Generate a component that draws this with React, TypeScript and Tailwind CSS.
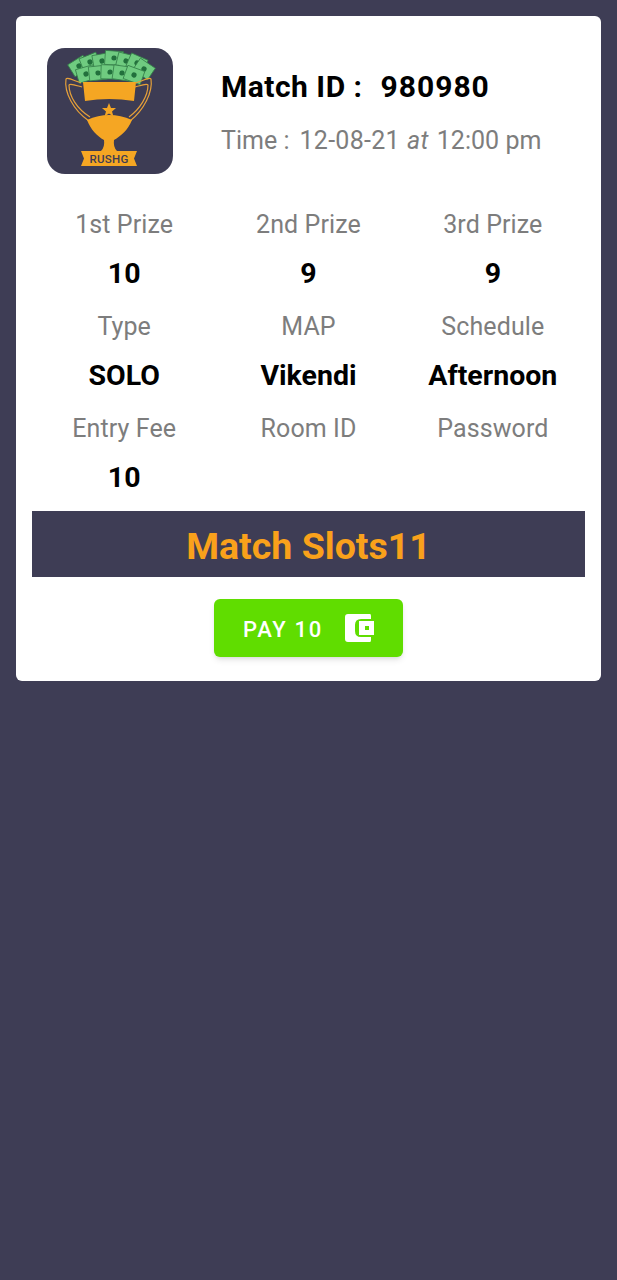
const cells = [
  { label: "1st Prize", value: "10" },
  { label: "2nd Prize", value: "9" },
  { label: "3rd Prize", value: "9" },
  { label: "Type", value: "SOLO" },
  { label: "MAP", value: "Vikendi" },
  { label: "Schedule", value: "Afternoon" },
  { label: "Entry Fee", value: "10" },
  { label: "Room ID", value: "" },
  { label: "Password", value: "" },
];

// drawn logo, coordinates are 126x126 px
function Logo() {
  const notes = [
    [32, 18, -32],
    [43, 14, -22],
    [55, 13, -10],
    [67, 10, 4],
    [79, 13, 14],
    [90, 15, 24],
    [97, 21, 34],
    [39, 26, -16],
    [51, 25, -6],
    [63, 24, 2],
    [75, 25, 8],
    [87, 27, 20],
  ];
  return (
    <svg width="126" height="126" viewBox="0 0 126 126" className="shrink-0">
      <rect width="126" height="126" rx="18" fill="#3d3c54" />
      {notes.map(([x, y, r], i) => (
        <g key={i} transform={`rotate(${r} ${x} ${y})`}>
          <rect x={x - 9} y={y - 7} width="18" height="14" fill="#6fcb80" stroke="#357f49" strokeWidth="0.8" />
          <circle cx={x} cy={y} r="2.6" fill="#22703c" />
        </g>
      ))}
      <path d="M34 35 C24 31 20 29 19 31 C17 44 26 62 42 73" fill="none" stroke="#e5a03a" strokeWidth="1.2" />
      <path d="M35 39 C28 37 23 35 22 37 C22 48 30 61 43 69" fill="none" stroke="#e5a03a" strokeWidth="1.2" />
      <path d="M89 35 C99 31 103 29 104 31 C106 44 97 62 83 73" fill="none" stroke="#e5a03a" strokeWidth="1.2" />
      <path d="M88 39 C95 37 100 35 101 37 C101 48 93 61 82 69" fill="none" stroke="#e5a03a" strokeWidth="1.2" />
      <path d="M36 34 H89 L87 53 Q62 49 38 53 Z" fill="#f5a623" />
      <path d="M40 72 Q62 62 85 72 C81 82 74 88 67 92 Q66 99 70 103 H54 Q58 99 57 92 C50 88 44 82 40 72 Z" fill="#f5a623" />
      <path d="M62 55 L64 60 L69 60 L65 63.5 L66.5 68.5 L62 65.5 L57.5 68.5 L59 63.5 L55 60 L60 60 Z" fill="#f5a623" />
      <path d="M34 103 H90 L87 110.5 L90 118 H34 L37 110.5 Z" fill="#f5a623" />
      <text x="62" y="115" textAnchor="middle" fontSize="11.5" fontWeight="500" letterSpacing="0.3" fill="#3d3c54" fontFamily="Roboto, sans-serif">
        RUSHG
      </text>
    </svg>
  );
}

export default function App() {
  return (
    <div className="min-h-[1280px] bg-[#3e3d55] p-4 font-['Roboto',sans-serif]">
      <div className="rounded-md bg-white px-4 pt-8 pb-6">
        {/* Header */}
        <div className="flex items-center pl-[15px]">
          <Logo />
          <div className="ml-12 pt-1">
            <div className="flex text-[30px] leading-9 font-bold text-black">
              <span className="tracking-[0.5px]">Match ID :</span>
              <span className="ml-[18px] tracking-[1px]">980980</span>
            </div>
            <div className="mt-5 flex text-[25px] leading-8 text-[#7d7d7d]">
              <span>Time :</span>
              <span className="ml-[10px] tracking-[0.3px]">12-08-21</span>
              <span className="ml-[7px] italic tracking-[0.3px]">at</span>
              <span className="ml-[8px] tracking-[0.05px]">12:00 pm</span>
            </div>
          </div>
        </div>

        {/* Match details */}
        <div className="mt-[35px] grid grid-cols-3">
          {cells.map((cell) => (
            <div key={cell.label} className="flex h-[102px] flex-col items-center text-center">
              <div className="text-[25px] leading-8 tracking-[0.1px] text-[#7d7d7d]">{cell.label}</div>
              <div className="mt-[17px] text-[28.5px] leading-8 font-bold text-black">{cell.value}</div>
            </div>
          ))}
        </div>

        {/* Slots */}
        <div className="-mt-1 flex h-[66px] items-center justify-center bg-[#3e3d55] pt-1 text-[37.5px] font-bold text-[#f9a11b]">
          Match Slots11
        </div>

        <div className="mt-[22px] flex justify-center">
          <button className="flex h-[58px] w-[189px] items-center justify-center gap-[21px] rounded-md bg-[#60dd00] pt-0.5 text-[22px] font-medium tracking-[1.7px] text-white shadow-md">
            PAY 10
            <svg width="30" height="30" viewBox="0 0 30 30" className="-mt-0.5">
              <path d="M4 1 H26 Q27 1 27 3 V6 H17 Q11 6 11 12 V18 Q11 24 17 24 H27 V27 Q27 29 26 29 H4 Q1 29 1 26 V4 Q1 1 4 1 Z" fill="white" />
              <path fillRule="evenodd" d="M15 8 H30 V22 H15 Z M21 13 V17 H25 V13 Z" fill="white" />
            </svg>
          </button>
        </div>
      </div>
    </div>
  );
}
